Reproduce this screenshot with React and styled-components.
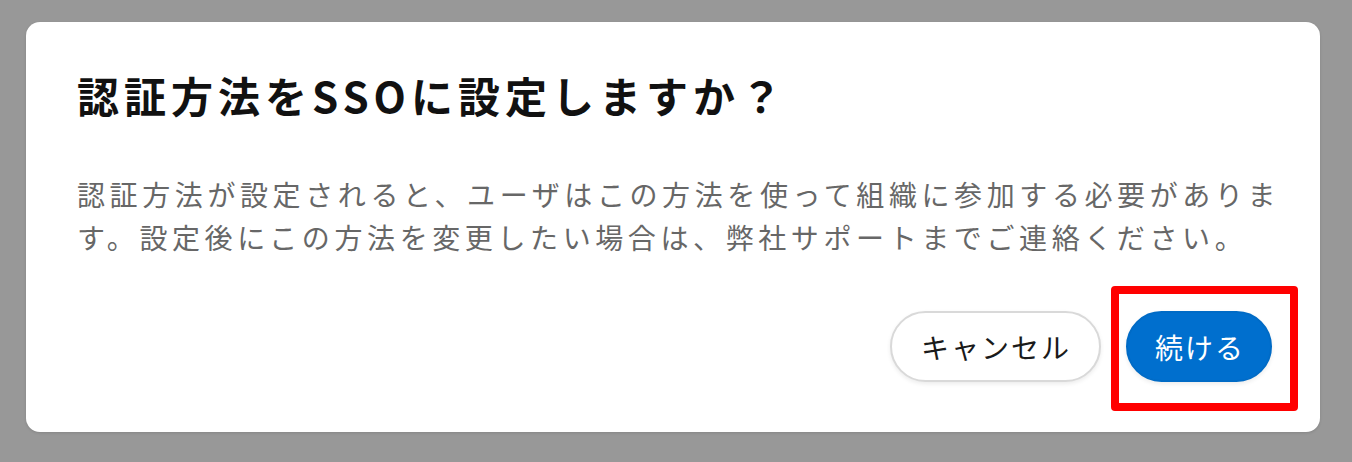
import React from 'react';
import styled, { createGlobalStyle } from 'styled-components';

const GlobalStyle = createGlobalStyle`
  html, body {
    margin: 0;
    padding: 0;
    background: #989898;
  }
  body {
    font-family: "Noto Sans CJK JP", "Noto Sans", sans-serif;
  }
`;

const Backdrop = styled.div`
  width: 1352px;
  height: 462px;
  padding: 22px 32px 30px 26px;
  box-sizing: border-box;
  background: #989898;
`;

const Dialog = styled.div`
  width: 1294px;
  height: 410px;
  box-sizing: border-box;
  padding: 45px 30px 50px 51px;
  background: #ffffff;
  border-radius: 14px;
  box-shadow: 0 1px 3px rgba(0, 0, 0, 0.12);
  display: flex;
  flex-direction: column;
`;

const Title = styled.h1`
  margin: 0;
  font-size: 42px;
  line-height: 56px;
  font-weight: 700;
  letter-spacing: 5px;
  color: #111111;
`;

const Message = styled.p`
  margin: 50px 0 0;
  font-size: 28px;
  line-height: 43px;
  letter-spacing: 4.6px;
  color: #676767;
`;

const Footer = styled.div`
  margin-top: auto;
  margin-right: 18px;
  display: flex;
  justify-content: flex-end;
  gap: 25px;
`;

const Button = styled.button`
  height: 71px;
  padding: ${({ $primary }) => ($primary ? '0 25px 0 27px' : '0 28px 0 29px')};
  border-radius: 36px;
  font-family: inherit;
  font-size: 28px;
  letter-spacing: 2px;
  cursor: pointer;
  border: 2px solid ${({ $primary }) => ($primary ? '#006bc6' : '#d9d9d9')};
  background: ${({ $primary }) => ($primary ? '#006fce' : '#ffffff')};
  color: ${({ $primary }) => ($primary ? '#ffffff' : '#1a1a1a')};
  box-shadow: 0 2px 4px rgba(0, 0, 0, 0.08);
`;

const Marked = styled.div`
  position: relative;
  display: flex;
`;

const Annotation = styled.span`
  position: absolute;
  top: -25px;
  left: -15px;
  right: -26px;
  bottom: -29px;
  border: 8px solid #ff0000;
  border-radius: 4px;
  pointer-events: none;
`;

const App = () => (
  <>
    <GlobalStyle />
    <Backdrop>
      <Dialog>
        <Title>認証方法をSSOに設定しますか？</Title>
        <Message>
          認証方法が設定されると、ユーザはこの方法を使って組織に参加する必要があります。設定後にこの方法を変更したい場合は、弊社サポートまでご連絡ください。
        </Message>
        <Footer>
          <Button>キャンセル</Button>
          <Marked>
            <Button $primary>続ける</Button>
            <Annotation />
          </Marked>
        </Footer>
      </Dialog>
    </Backdrop>
  </>
);

export default App;
